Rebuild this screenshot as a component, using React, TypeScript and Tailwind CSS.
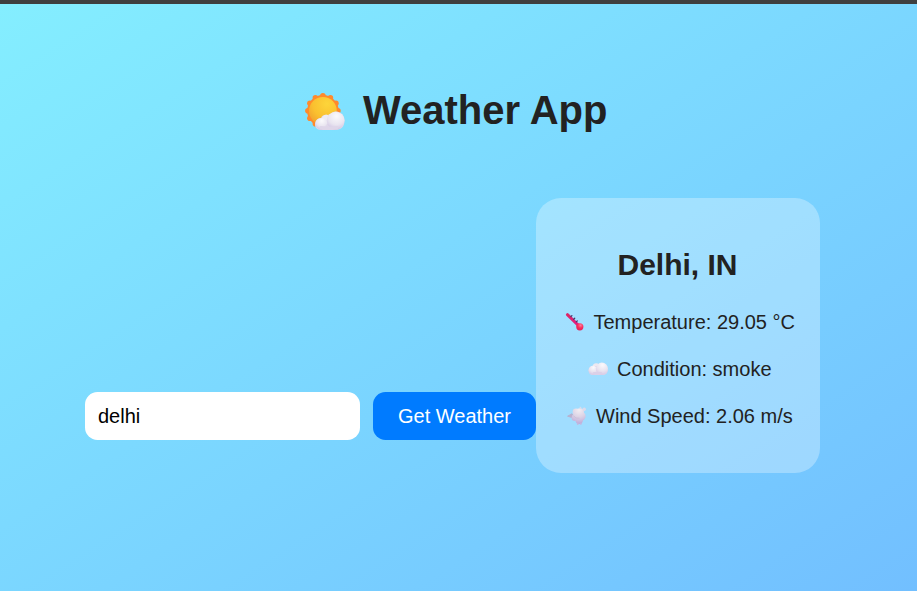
import React from "react";

const RAY_ANGLES = Array.from({ length: 12 }, (_, i) => (i * Math.PI) / 6);

function SunCloud() {
  return (
    <svg className="mt-1 block h-[40px] w-[42px]" viewBox="0 0 42 40">
      <defs>
        <radialGradient id="sun" cx="0.65" cy="0.25" r="0.85">
          <stop offset="0" stopColor="#fdd53a" />
          <stop offset="0.6" stopColor="#fac02f" />
          <stop offset="1" stopColor="#f0a02f" />
        </radialGradient>
        <radialGradient id="puff" cx="0.55" cy="0.25" r="0.8">
          <stop offset="0" stopColor="#fbfafc" />
          <stop offset="0.6" stopColor="#e9e5f0" />
          <stop offset="1" stopColor="#cfc2e2" />
        </radialGradient>
      </defs>
      <g fill="#ff8a2c">
        <circle cx="18.9" cy="18.8" r="15.8" />
        {RAY_ANGLES.map((a) => (
          <circle key={a} cx={18.9 + 15 * Math.sin(a)} cy={18.8 - 15 * Math.cos(a)} r="2.8" />
        ))}
      </g>
      <circle cx="18.9" cy="18.8" r="13.9" fill="url(#sun)" />
      <path
        d="M17 38 C13 38 11 35.5 11 32.3 C11 28.8 13.5 26.3 17 26 C18.4 22.6 23 21.8 25.4 24.2 C27 20 31 18.8 34.5 19.9 C38.5 21.2 40.5 24.5 40.5 28.5 C40.5 34.5 37 38 32 38Z"
        fill="#dfd7e9"
      />
      <circle cx="22.2" cy="27.4" r="4.6" fill="#eeebf3" />
      <circle cx="17.2" cy="31.7" r="5.8" fill="url(#puff)" />
      <circle cx="31.6" cy="28.6" r="8.9" fill="url(#puff)" />
      <path d="M17 35.4 Q24 36.6 33 35.5" stroke="#ded6e9" strokeWidth="3" fill="none" strokeLinecap="round" />
    </svg>
  );
}

function Thermometer() {
  return (
    <svg className="-mt-0.5 block h-[20px] w-[20px]" viewBox="0 0 20 20">
      <defs>
        <linearGradient id="tube" x1="0" y1="0" x2="1" y2="1">
          <stop offset="0" stopColor="#dc2860" />
          <stop offset="1" stopColor="#e8188c" />
        </linearGradient>
        <radialGradient id="bulb" cx="0.6" cy="0.3" r="0.75">
          <stop offset="0" stopColor="#ff7a98" />
          <stop offset="0.5" stopColor="#f82c5c" />
          <stop offset="1" stopColor="#e0205c" />
        </radialGradient>
      </defs>
      <path d="M2.4 2.7 L13.5 13.5" stroke="#db2272" strokeWidth="3" strokeLinecap="round" />
      <path d="M2.6 2.6 L13 12.8" stroke="url(#tube)" strokeWidth="1.8" strokeLinecap="round" />
      <path d="M5.9 4.6 L6.9 3.6 M8.7 7.2 L9.7 6.2 M11.3 9.9 L12.3 8.9" stroke="#473a6d" strokeWidth="1.3" strokeLinecap="round" />
      <circle cx="14.8" cy="14.8" r="3.6" fill="url(#bulb)" />
    </svg>
  );
}

function Cloud() {
  return (
    <svg className="-mt-0.5 block h-[20px] w-[22px]" viewBox="0 0 22 20">
      <defs>
        <radialGradient id="cloud" cx="0.55" cy="0.2" r="0.9">
          <stop offset="0" stopColor="#fbf9fc" />
          <stop offset="0.55" stopColor="#e8e3ef" />
          <stop offset="1" stopColor="#d0c0e3" />
        </radialGradient>
      </defs>
      <circle cx="8.2" cy="7.8" r="3.6" fill="#eee8f0" />
      <path d="M4.8 16 C2 16 0.6 14 0.6 11.5 C0.6 9 2.5 7 5 7 L16 7 L19.8 11 C19.8 14 17.5 16 14.5 16Z" fill="#ddd2e7" />
      <circle cx="5" cy="11.2" r="4.4" fill="url(#cloud)" />
      <circle cx="13.9" cy="9.7" r="6.1" fill="url(#cloud)" />
      <path d="M6 14.2 H13" stroke="#dbd0e7" strokeWidth="2.2" strokeLinecap="round" />
    </svg>
  );
}

function WindPuff() {
  return (
    <svg className="-mt-0.5 block h-[20px] w-[20px]" viewBox="0 0 20 20">
      <defs>
        <radialGradient id="wind" gradientUnits="userSpaceOnUse" cx="12" cy="4" r="14">
          <stop offset="0" stopColor="#f2edf2" />
          <stop offset="0.5" stopColor="#dcd3e5" />
          <stop offset="1" stopColor="#bca9d9" />
        </radialGradient>
      </defs>
      <path d="M0.6 10.2 L5 7.8 L7 13 L4.6 11.4Z" fill="#b8b2d0" stroke="#b8b2d0" strokeLinejoin="round" />
      <g fill="url(#wind)">
        <circle cx="9" cy="6" r="3.4" />
        <circle cx="7.8" cy="11.8" r="3.2" />
        <circle cx="12.2" cy="14.2" r="3.7" />
        <circle cx="14.4" cy="10.3" r="4.2" />
        <circle cx="13" cy="6.3" r="4" />
        <circle cx="10.8" cy="9.6" r="4.6" />
      </g>
      <path d="M6.5 9.8 Q8.5 13 12.5 12.2" stroke="#c8bad6" strokeWidth="0.7" fill="none" />
      <circle cx="17.2" cy="3.3" r="1.7" fill="#dcdaeb" />
      <circle cx="13.4" cy="1.7" r="0.9" fill="#d7dced" />
      <circle cx="10.8" cy="18" r="0.9" fill="#c4b5dd" />
      <circle cx="13.8" cy="17.8" r="1" fill="#c4b5dd" />
    </svg>
  );
}

export default function App() {
  return (
    <div className="flex h-[591px] w-full flex-col overflow-hidden bg-[#3f3f3f] font-['Liberation_Sans',Arial,sans-serif] text-[#222222]">
      <main className="mt-1 min-h-0 flex-1 bg-[linear-gradient(to_bottom_right,#84eeff_0%,#72bfff_100%)]">
        <header className="mt-[83px] flex h-[46px] items-center pl-[304px]">
          <SunCloud />
          <h1 className="ml-[17px] text-[40px] leading-[46px] font-bold whitespace-nowrap">Weather App</h1>
        </header>
        <div className="mt-[65px] flex items-end pl-[85px]">
          <form className="mb-[33px] flex gap-[13px]" onSubmit={(e) => e.preventDefault()}>
            <input
              className="h-[48px] w-[275px] rounded-[12.5px] bg-white px-[13px] text-[20px] text-black outline-none"
              defaultValue="delhi"
              aria-label="City"
            />
            <button className="h-[48px] w-[163px] rounded-[12.5px] bg-[#007bff] text-[20px] text-white">
              Get Weather
            </button>
          </form>
          <section className="h-[275px] w-[284px] rounded-[25px] bg-white/30 pt-[50px]">
            <h2 className="pr-px text-center text-[30px] leading-[34px] font-bold">Delhi, IN</h2>
            <div className="mt-[29px] flex flex-col gap-6 text-[20px] leading-[23px] whitespace-nowrap">
              <p className="flex items-center pl-[29px]">
                <Thermometer />
                <span className="ml-[8.5px]">Temperature: 29.05 °C</span>
              </p>
              <p className="flex items-center pl-[52px]">
                <Cloud />
                <span className="ml-[7px]">Condition: smoke</span>
              </p>
              <p className="flex items-center pl-[31px]">
                <WindPuff />
                <span className="ml-[9px]">Wind Speed: 2.06 m/s</span>
              </p>
            </div>
          </section>
        </div>
      </main>
    </div>
  );
}
